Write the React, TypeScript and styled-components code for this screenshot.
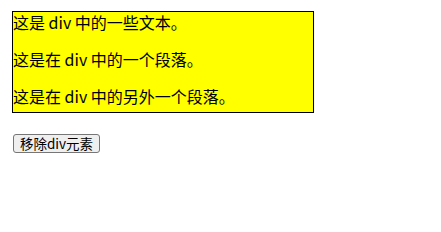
import React, { useState } from "react";
import styled, { createGlobalStyle } from "styled-components";

const GlobalStyle = createGlobalStyle`
  body {
    margin: 0;
    background: #fff;
    font-family: "Noto Sans CJK SC", "Liberation Sans", sans-serif;
    color: #000;
  }
`;

const Page = styled.div`
  padding: 11px 0 0 12px;
`;

const Box = styled.div`
  width: 300px;
  height: 100px;
  border: 1px solid #000;
  background-color: #ffff00;
  font-size: 16px;
  line-height: 21px;
`;

const Para = styled.p`
  margin: 16px 0;
`;

const RemoveButton = styled.button`
  margin: 21px 0 0 1px;
  font-family: "Noto Sans CJK SC", "Liberation Sans", sans-serif;
  font-size: 13.5px;
  line-height: 15px;
  padding: 1px 6px;
  color: #000;
  background: #efefef;
  border: 1px solid #767676;
  border-radius: 3px;
  cursor: pointer;
`;

const App: React.FC = () => {
  const [visible, setVisible] = useState(true);

  return (
    <Page>
      <GlobalStyle />
      {visible && (
        <Box>
          这是 div 中的一些文本。
          <Para>这是在 div 中的一个段落。</Para>
          <Para>这是在 div 中的另外一个段落。</Para>
        </Box>
      )}
      <RemoveButton onClick={() => setVisible(false)}>移除div元素</RemoveButton>
    </Page>
  );
};

export default App;
